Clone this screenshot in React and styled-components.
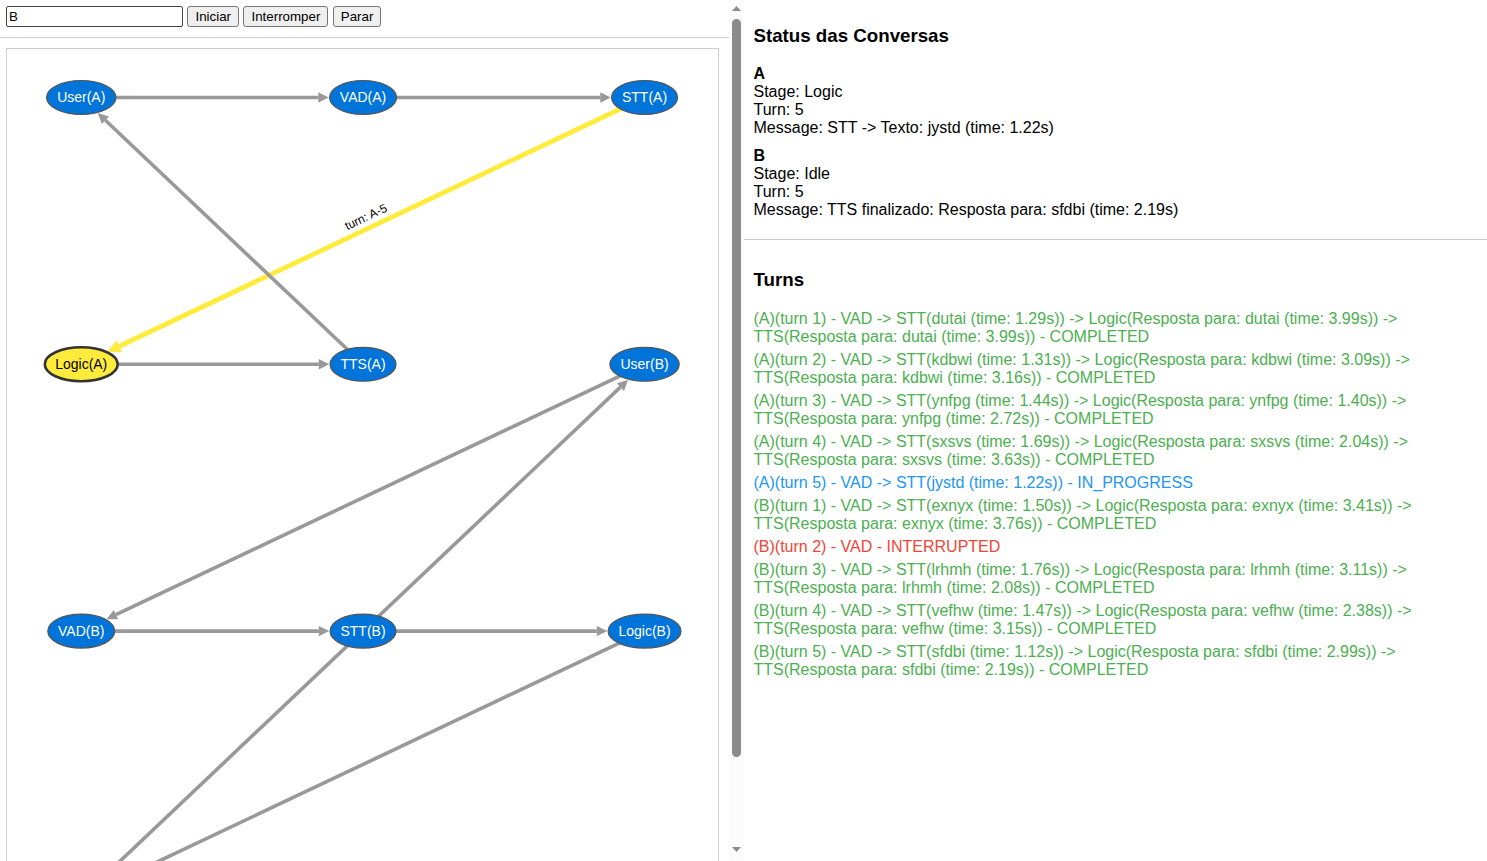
import React from "react";
import styled, { createGlobalStyle } from "styled-components";

const GlobalStyle = createGlobalStyle`
  * { box-sizing: border-box; }
  body {
    margin: 0;
    background: #fff;
    color: #000;
    font-family: Arial, "Liberation Sans", sans-serif;
    font-size: 16px;
    line-height: 18px;
  }
`;

const Layout = styled.div`
  display: grid;
  grid-template-columns: 1fr 1fr;
  height: 100vh;
  overflow: hidden;
`;

const LeftPane = styled.div`
  display: flex;
  min-width: 0;
  min-height: 0;
`;

const LeftContent = styled.main`
  flex: 1;
  min-width: 0;
  overflow: hidden;
`;

const Toolbar = styled.form`
  padding: 6px 6px 10px;
  border-bottom: 1px solid #ccc;
  line-height: 21px;
`;

const NameInput = styled.input`
  width: 177px;
  height: 21px;
  padding: 1px 2px;
  border: 1px solid #444;
  border-radius: 2px;
  background: #fff;
  color: #000;
  font-family: Arial, "Liberation Sans", sans-serif;
  vertical-align: top;
`;

const Button = styled.button`
  height: 21px;
  padding: 1px 7px;
  border: 1px solid #767676;
  border-radius: 3px;
  background: #efefef;
  color: #000;
  font-family: Arial, "Liberation Sans", sans-serif;
  vertical-align: top;
`;

const Canvas = styled.div`
  margin: 10px 10px 10px 6px;
  border: 1px solid #ccc;
`;

const Diagram = styled.svg`
  display: block;
  width: 100%;
  height: auto;
`;

const NodeLabel = styled.text`
  font-size: 14px;
  text-anchor: middle;
  fill: ${(p) => (p.$active ? "#000" : "#fff")};
`;

const EdgeLabel = styled.text`
  font-size: 12px;
  text-anchor: middle;
  fill: #000;
`;

const Scrollbar = styled.div`
  flex: none;
  display: flex;
  flex-direction: column;
  align-items: center;
  width: 15px;
  padding: 6px 0 9px;
  background: #fcfcfc;
`;

const ScrollArrow = styled.svg`
  flex: none;
  display: block;
  width: 9px;
  height: 5px;
  fill: #8b8b8b;
`;

const ScrollTrack = styled.div`
  flex: 1;
  width: 9px;
  margin: 8px 0;
`;

const ScrollThumb = styled.div`
  height: 90%;
  border-radius: 5px;
  background: #8b8b8b;
`;

const RightPane = styled.aside`
  min-width: 0;
  overflow: hidden;
`;

const Section = styled.section`
  padding: ${(p) => (p.$divided ? "25px 10px 20px" : "29px 10px")};
  border-bottom: ${(p) => (p.$divided ? "1px solid #ccc" : "none")};
`;

const Heading = styled.h3`
  margin: 0 0 18px;
  line-height: 22px;
`;

const StatusList = styled.div`
  display: grid;
  gap: 10px;
`;

const TurnList = styled.div`
  display: grid;
  gap: 5px;
  padding: 1px 0;
`;

const turnColors = {
  COMPLETED: "#4caf50",
  IN_PROGRESS: "#2196f3",
  INTERRUPTED: "#f44336",
};

const Turn = styled.div`
  color: ${(p) => turnColors[p.$status]};
`;

const COLUMNS = [74.3, 356.3, 638];
const ROWS = [48.5, 315.5, 582.5, 849.5];
const NODE_RY = 17;

const nodes = {
  userA: { label: "User(A)", x: COLUMNS[0], y: ROWS[0], rx: 34.7 },
  vadA: { label: "VAD(A)", x: COLUMNS[1], y: ROWS[0], rx: 33.5 },
  sttA: { label: "STT(A)", x: COLUMNS[2], y: ROWS[0], rx: 33 },
  logicA: { label: "Logic(A)", x: COLUMNS[0], y: ROWS[1], rx: 36.5, active: true },
  ttsA: { label: "TTS(A)", x: COLUMNS[1], y: ROWS[1], rx: 33 },
  userB: { label: "User(B)", x: COLUMNS[2], y: ROWS[1], rx: 34.7 },
  vadB: { label: "VAD(B)", x: COLUMNS[0], y: ROWS[2], rx: 33.5 },
  sttB: { label: "STT(B)", x: COLUMNS[1], y: ROWS[2], rx: 33 },
  logicB: { label: "Logic(B)", x: COLUMNS[2], y: ROWS[2], rx: 36.5 },
};

const lowerLeft = { x: COLUMNS[0], y: ROWS[3], rx: 33 };

const edges = [
  { from: nodes.userA, to: nodes.vadA },
  { from: nodes.vadA, to: nodes.sttA },
  { from: nodes.sttA, to: nodes.logicA, active: true, label: "turn: A-5" },
  { from: nodes.logicA, to: nodes.ttsA },
  { from: nodes.ttsA, to: nodes.userA },
  { from: nodes.userB, to: nodes.vadB },
  { from: nodes.vadB, to: nodes.sttB },
  { from: nodes.sttB, to: nodes.logicB },
  { from: nodes.logicB, to: lowerLeft },
  { from: lowerLeft, to: nodes.userB },
];

function Edge({ from, to, active, label }) {
  const dx = to.x - from.x;
  const dy = to.y - from.y;
  const length = Math.hypot(dx, dy);
  const ux = dx / length;
  const uy = dy / length;
  const inset = 1 / Math.hypot(ux / to.rx, uy / NODE_RY) + 0.8;
  const tip = { x: to.x - ux * inset, y: to.y - uy * inset };
  const head = active ? 13 : 10.5;
  const half = active ? 6.5 : 5.2;
  const base = { x: tip.x - ux * head, y: tip.y - uy * head };
  const color = active ? "#ffeb3b" : "#999";
  const points = [
    [tip.x, tip.y],
    [base.x - uy * half, base.y + ux * half],
    [base.x + uy * half, base.y - ux * half],
  ];
  const angle = (Math.atan2(-dy, -dx) * 180) / Math.PI;
  const mid = { x: (from.x + to.x) / 2, y: (from.y + to.y) / 2 };
  return (
    <g>
      <line x1={from.x} y1={from.y} x2={base.x} y2={base.y} stroke={color} strokeWidth={active ? 4.8 : 3.6} />
      <polygon points={points.map((p) => p.join(",")).join(" ")} fill={color} />
      {label && (
        <EdgeLabel
          transform={`translate(${mid.x + 3} ${mid.y - 14}) rotate(${angle > 0 ? angle - 180 : angle})`}
          y="4"
        >
          {label}
        </EdgeLabel>
      )}
    </g>
  );
}

function Node({ label, x, y, rx, active }) {
  return (
    <g>
      <ellipse
        cx={x}
        cy={y}
        rx={rx}
        ry={NODE_RY}
        fill={active ? "#ffeb3b" : "#0074d9"}
        stroke={active ? "#333" : "#555"}
        strokeWidth={active ? 2.6 : 1.2}
      />
      <NodeLabel x={x} y={y + 4.5} $active={active}>
        {label}
      </NodeLabel>
    </g>
  );
}

const statuses = [
  { name: "A", stage: "Logic", turn: 5, message: "STT -> Texto: jystd (time: 1.22s)" },
  { name: "B", stage: "Idle", turn: 5, message: "TTS finalizado: Resposta para: sfdbi (time: 2.19s)" },
];

const turns = [
  { who: "A", n: 1, word: "dutai", stt: "1.29", logic: "3.99", tts: "3.99", status: "COMPLETED" },
  { who: "A", n: 2, word: "kdbwi", stt: "1.31", logic: "3.09", tts: "3.16", status: "COMPLETED" },
  { who: "A", n: 3, word: "ynfpg", stt: "1.44", logic: "1.40", tts: "2.72", status: "COMPLETED" },
  { who: "A", n: 4, word: "sxsvs", stt: "1.69", logic: "2.04", tts: "3.63", status: "COMPLETED" },
  { who: "A", n: 5, word: "jystd", stt: "1.22", status: "IN_PROGRESS" },
  { who: "B", n: 1, word: "exnyx", stt: "1.50", logic: "3.41", tts: "3.76", status: "COMPLETED" },
  { who: "B", n: 2, status: "INTERRUPTED" },
  { who: "B", n: 3, word: "lrhmh", stt: "1.76", logic: "3.11", tts: "2.08", status: "COMPLETED" },
  { who: "B", n: 4, word: "vefhw", stt: "1.47", logic: "2.38", tts: "3.15", status: "COMPLETED" },
  { who: "B", n: 5, word: "sfdbi", stt: "1.12", logic: "2.99", tts: "2.19", status: "COMPLETED" },
];

function describeTurn(t) {
  const steps = ["VAD"];
  if (t.stt) steps.push(`STT(${t.word} (time: ${t.stt}s))`);
  if (t.logic) steps.push(`Logic(Resposta para: ${t.word} (time: ${t.logic}s))`);
  if (t.tts) steps.push(`TTS(Resposta para: ${t.word} (time: ${t.tts}s))`);
  return `(${t.who})(turn ${t.n}) - ${steps.join(" -> ")} - ${t.status}`;
}

export default function App() {
  return (
    <>
      <GlobalStyle />
      <Layout>
        <LeftPane>
          <LeftContent>
            <Toolbar onSubmit={(e) => e.preventDefault()}>
              <NameInput type="text" defaultValue="B" aria-label="Conversa" />{" "}
              <Button type="button">Iniciar</Button>{" "}
              <Button type="button">Interromper</Button>{" "}
              <Button type="button">Parar</Button>
            </Toolbar>
            <Canvas>
              <Diagram viewBox="0 0 711 900">
                {edges.map((edge, i) => (
                  <Edge key={i} {...edge} />
                ))}
                {Object.entries(nodes).map(([id, node]) => (
                  <Node key={id} {...node} />
                ))}
              </Diagram>
            </Canvas>
          </LeftContent>
          <Scrollbar aria-hidden="true">
            <ScrollArrow viewBox="0 0 9 5">
              <path d="M0 5 L4.5 0 L9 5 Z" />
            </ScrollArrow>
            <ScrollTrack>
              <ScrollThumb />
            </ScrollTrack>
            <ScrollArrow viewBox="0 0 9 5">
              <path d="M0 0 L4.5 5 L9 0 Z" />
            </ScrollArrow>
          </Scrollbar>
        </LeftPane>
        <RightPane>
          <Section $divided>
            <Heading>Status das Conversas</Heading>
            <StatusList>
              {statuses.map((s) => (
                <div key={s.name}>
                  <strong>{s.name}</strong>
                  <div>Stage: {s.stage}</div>
                  <div>Turn: {s.turn}</div>
                  <div>Message: {s.message}</div>
                </div>
              ))}
            </StatusList>
          </Section>
          <Section>
            <Heading>Turns</Heading>
            <TurnList>
              {turns.map((t) => (
                <Turn key={t.who + t.n} $status={t.status}>
                  {describeTurn(t)}
                </Turn>
              ))}
            </TurnList>
          </Section>
        </RightPane>
      </Layout>
    </>
  );
}
